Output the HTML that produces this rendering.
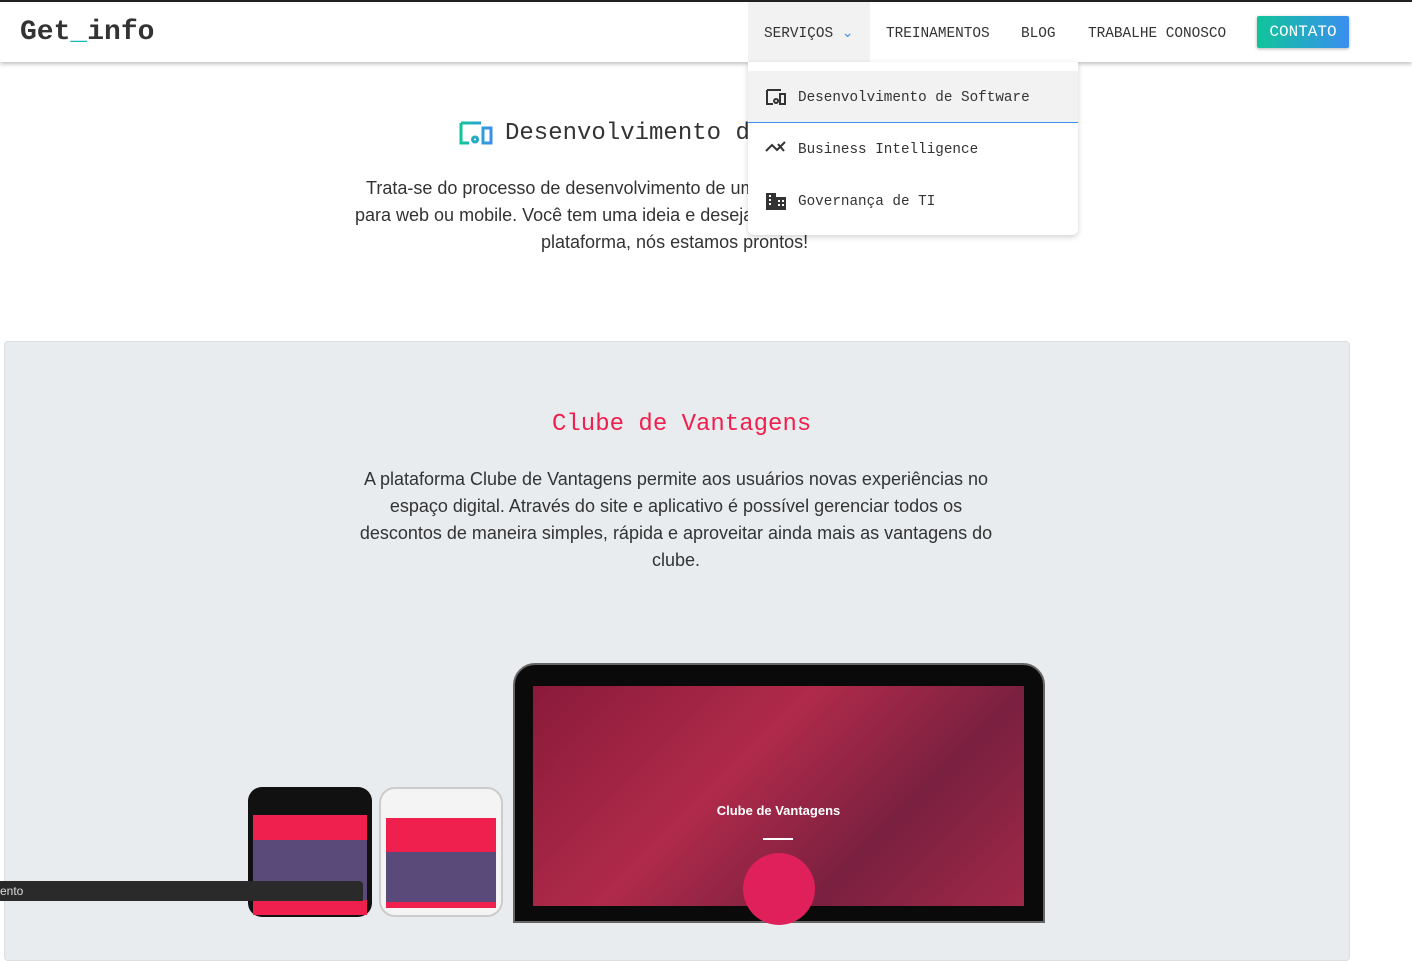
<!DOCTYPE html>
<html><head><meta charset="utf-8"><style>
*{margin:0;padding:0;box-sizing:border-box}
body{width:1412px;height:901px;overflow:hidden;background:#fff;font-family:"Liberation Sans",sans-serif;position:relative;color:#333}
.top{position:absolute;left:0;top:0;width:1412px;height:2px;background:#222}
.nav{position:absolute;left:0;top:2px;width:1412px;height:60px;background:#fff;box-shadow:0 2px 4px rgba(0,0,0,.25);z-index:5}
.logo{position:absolute;left:20px;top:13px;font:bold 28px/36px "Liberation Mono",monospace;color:#333}
.logo span{color:#1cb8b8}
.mi{position:absolute;top:0;height:60px;font:14.4px/64px "Liberation Mono",monospace;color:#333}
.serv{left:748px;width:122px;background:#f2f2f2;padding-left:16px}
.btn{position:absolute;left:1257px;top:14px;width:92px;height:32px;background:linear-gradient(90deg,#10c49a,#3a8ef0);color:#fff;font:16px/32px "Liberation Mono",monospace;text-align:center;border-radius:2px;box-shadow:0 1px 3px rgba(0,0,0,.3)}
.dd{position:absolute;left:748px;top:62px;width:330px;height:173px;background:#fff;box-shadow:0 2px 6px rgba(0,0,0,.18);border-radius:0 0 6px 6px;z-index:6}
.dd .it{position:absolute;left:0;width:330px;height:52px;font:14.3px/54px "Liberation Mono",monospace;color:#333;padding-left:50px}
.dd svg{position:absolute;left:17px;top:16px}
h2{position:absolute;font:400 24px/30px "Liberation Mono",monospace;color:#333;white-space:nowrap}
p.t{position:absolute;font:18px/27px "Liberation Sans",sans-serif;color:#333;text-align:center;white-space:nowrap}
.gray{position:absolute;left:4px;top:341px;width:1346px;height:620px;background:#e9ecef;border:1px solid #dcdfe2;border-radius:4px}
</style></head><body>
<div class="top"></div>
<div class="nav">
<div class="logo">Get<span>_</span>info</div>
<div class="mi serv">SERVIÇOS <span style="color:#3a8ef0;font-size:14px">&#8964;</span></div>
<div class="mi" style="left:886px">TREINAMENTOS</div>
<div class="mi" style="left:1021px">BLOG</div>
<div class="mi" style="left:1088px">TRABALHE CONOSCO</div>
<div class="btn">CONTATO</div>
</div>
<div class="dd">
<div class="it" style="top:9px;background:#f2f2f2;border-bottom:1px solid #3a8ef0"><svg width="22" height="20" viewBox="0 0 22 20"><path d="M2 3h14M2 3v14h6M20 7h-5v10h5z M11 12a2 2 0 1 0 0.1 0" fill="none" stroke="#333" stroke-width="2"/></svg>Desenvolvimento de Software</div>
<div class="it" style="top:61px"><svg width="22" height="20" viewBox="0 0 22 20"><path d="M1 12l6-6 5 5 8-8M13 5l6 7" fill="none" stroke="#333" stroke-width="2"/></svg>Business Intelligence</div>
<div class="it" style="top:113px"><svg width="22" height="20" viewBox="0 0 22 20"><path d="M1 2h10v4h10v13H1z" fill="#333"/><path d="M4 5h2M4 9h2M4 13h2M13 10h2M17 10h2M13 14h2M17 14h2" stroke="#fff" stroke-width="2"/></svg>Governança de TI</div>
</div>
<svg style="position:absolute;left:459px;top:120px" width="35" height="26" viewBox="0 0 35 26"><defs><linearGradient id="g" x1="0" x2="1"><stop offset="0" stop-color="#10c49a"/><stop offset="1" stop-color="#3a8ef0"/></linearGradient></defs><path d="M2 3h20M2 3v20h8M32 8h-8v15h8z M16 17a2.5 2.5 0 1 0 .1 0" fill="none" stroke="url(#g)" stroke-width="3"/></svg>
<h2 style="left:505px;top:119px">Desenvolvimento de Software</h2>
<p class="t" style="left:366px;top:175px">Trata-se do processo de desenvolvimento de um</p>
<p class="t" style="left:355px;top:202px">para web ou mobile. Você tem uma ideia e deseja</p>
<p class="t" style="left:541px;top:229px">plataforma, nós estamos prontos!</p>
<div class="gray"></div>
<h2 style="left:552px;top:410px;color:#f0204e">Clube de Vantagens</h2>
<p class="t" style="left:326px;top:466px;width:700px">A plataforma Clube de Vantagens permite aos usuários novas experiências no<br>espaço digital. Através do site e aplicativo é possível gerenciar todos os<br>descontos de maneira simples, rápida e aproveitar ainda mais as vantagens do<br>clube.</p>
<div style="position:absolute;left:513px;top:663px;width:532px;height:260px;background:#0a0a0a;border-radius:22px 22px 0 0;border:2px solid #666"></div>
<div style="position:absolute;left:533px;top:686px;width:491px;height:220px;background:linear-gradient(135deg,#8a1a3a,#b02a4a 40%,#7a2040 70%,#a02848)"></div>
<div style="position:absolute;left:533px;top:803px;width:491px;text-align:center;color:#fff;font:bold 13px 'Liberation Sans',sans-serif">Clube de Vantagens</div>
<div style="position:absolute;left:763px;top:838px;width:30px;height:2px;background:#fff"></div>
<div style="position:absolute;left:743px;top:853px;width:72px;height:72px;border-radius:50%;background:#e0205a"></div>
<div style="position:absolute;left:248px;top:787px;width:124px;height:130px;background:#111;border-radius:14px"></div>
<div style="position:absolute;left:253px;top:815px;width:114px;height:100px;background:#f0204e"></div>
<div style="position:absolute;left:253px;top:840px;width:114px;height:60px;background:#5a4a7a"></div>
<div style="position:absolute;left:379px;top:787px;width:124px;height:130px;background:#f4f4f4;border:2px solid #ccc;border-radius:16px"></div>
<div style="position:absolute;left:386px;top:818px;width:110px;height:90px;background:#f0204e"></div>
<div style="position:absolute;left:386px;top:852px;width:110px;height:50px;background:#5a4a7a"></div>
<div style="position:absolute;left:0;top:881px;width:363px;height:20px;background:#2a2a2a;border-radius:0 4px 0 0;color:#ddd;font:12px/20px 'Liberation Sans',sans-serif">ento</div>
</body></html>
